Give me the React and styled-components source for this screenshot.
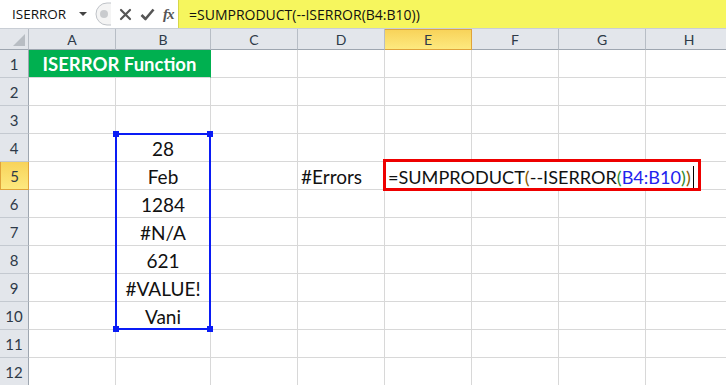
import React from "react";
import styled, { createGlobalStyle, css } from "styled-components";

const GlobalStyle = createGlobalStyle`
  body {
    margin: 0;
    background: #fff;
    overflow: hidden;
  }
`;

const COLS = ["A", "B", "C", "D", "E", "F", "G", "H"];
const COL_WIDTHS = "29px 87px 95px 87px 87px 87px 87px 87px 87px";

const DATA = {
  4: "28",
  5: "Feb",
  6: "1284",
  7: "#N/A",
  8: "621",
  9: "#VALUE!",
  10: "Vani",
};

const StyledWindow = styled.div`
  width: 726px;
  height: 385px;
  overflow: hidden;
  font-family: Lato, "Open Sans", sans-serif;
`;

const StyledFormulaBar = styled.div`
  display: flex;
  height: 28px;
  border-bottom: 1px solid #c9ced5;
  background: #fff;
  font-family: "Open Sans", "Noto Sans", sans-serif;
  font-size: 13.5px;
  color: #111;
`;

const StyledNameBox = styled.div`
  width: 92px;
  display: flex;
  align-items: center;
  justify-content: space-between;
  padding: 0 4px 0 12px;
  box-sizing: border-box;
`;

const StyledArrow = styled.span`
  width: 0;
  height: 0;
  border-left: 4px solid transparent;
  border-right: 4px solid transparent;
  border-top: 4px solid #444;
  margin-right: 1px;
`;

const StyledButtons = styled.div`
  display: flex;
  align-items: center;
  gap: 8px;
  width: 86px;
  padding-left: 3px;
  box-sizing: border-box;
`;

const StyledFx = styled.span`
  font-family: "Liberation Serif", serif;
  font-style: italic;
  font-weight: bold;
  font-size: 15px;
  color: #555;
  letter-spacing: -1px;
`;

const StyledFormulaInput = styled.div`
  flex: 1;
  display: flex;
  align-items: center;
  padding-left: 10px;
  background: #f6f65e;
  border-left: 1px solid #d6d64a;
  font-size: 14px;
`;

const StyledSheet = styled.div`
  position: relative;
  display: grid;
  grid-template-columns: ${COL_WIDTHS};
  grid-template-rows: 21px repeat(12, 28px);
`;

const headerBase = css`
  box-sizing: border-box;
  display: flex;
  align-items: center;
  justify-content: center;
  font-size: 14px;
  color: #2e3a48;
  background: #e3e6eb;
`;

const activeHeader = css`
  background: linear-gradient(#f8d35a, #fde97f);
  border-color: #e0a33a;
`;

const StyledCorner = styled.div`
  ${headerBase};
  border-right: 1px solid #b7bdc5;
  border-bottom: 1px solid #9ea6b0;
  align-items: flex-end;
  justify-content: flex-end;
  padding: 0 3px 3px 0;
`;

const StyledColHeader = styled.div`
  ${headerBase};
  border-right: 1px solid #b7bdc5;
  border-bottom: 1px solid #9ea6b0;
  ${(p) => p.$active && activeHeader};
  ${(p) => p.$active && "border: 1px solid #e0a33a; border-left: none;"};
`;

const StyledRowHeader = styled.div`
  ${headerBase};
  border-right: 1px solid #9ea6b0;
  border-bottom: 1px solid #c4c9d0;
  font-size: 15px;
  ${(p) => p.$active && activeHeader};
  ${(p) => p.$active && "border: 1px solid #e0a33a; border-top: none;"};
`;

const StyledCell = styled.div`
  position: relative;
  box-sizing: border-box;
  display: flex;
  align-items: center;
  justify-content: ${(p) => p.$align || "flex-start"};
  padding: 2px 3px 0;
  border-right: 1px solid ${(p) => (p.$noGrid ? "transparent" : "#d8d8d8")};
  border-bottom: 1px solid #d8d8d8;
  font-size: 19px;
  color: #111;
  white-space: nowrap;
  grid-column: span ${(p) => p.$span || 1};
  ${(p) =>
    p.$title &&
    css`
      background: #00b050;
      color: #fff;
      font-weight: bold;
      font-size: 18.5px;
      border-right-color: #00b050;
      padding-top: 0;
    `}
`;

const StyledSelection = styled.div`
  position: absolute;
  left: 115px;
  top: 104px;
  width: 96px;
  height: 197px;
  box-sizing: border-box;
  border: 2px solid #0a1cf5;
  pointer-events: none;
`;

const StyledHandle = styled.span`
  position: absolute;
  width: 6px;
  height: 6px;
  background: #0a1cf5;
  ${(p) => (p.$top ? "top: -4px;" : "bottom: -4px;")}
  ${(p) => (p.$left ? "left: -4px;" : "right: -4px;")}
`;

const StyledRedBox = styled.div`
  position: absolute;
  left: -2px;
  top: -3px;
  width: 318px;
  height: 32px;
  box-sizing: border-box;
  border: 3px solid #ee0000;
  z-index: 2;
  pointer-events: none;
`;

const StyledFormula = styled.span`
  position: relative;
  z-index: 1;
  display: flex;
  align-items: center;
  font-size: 18.1px;
`;

const StyledPart = styled.span`
  color: ${(p) => p.$color || "#111"};
`;

const StyledCaret = styled.span`
  display: inline-block;
  width: 0;
  height: 22px;
  margin-left: 2px;
  border-left: 1.5px solid #000;
`;

const CrossIcon = () => (
  <svg width="13" height="13" viewBox="0 0 13 13">
    <path d="M2 2 L11 11 M11 2 L2 11" stroke="#555" strokeWidth="2.2" strokeLinecap="round" />
  </svg>
);

const CheckIcon = () => (
  <svg width="15" height="13" viewBox="0 0 15 13">
    <path d="M1.5 7 L5.5 11 L13.5 1.5" stroke="#555" strokeWidth="2.6" fill="none" strokeLinejoin="round" />
  </svg>
);

const CapIcon = () => (
  <svg width="16" height="24" viewBox="0 0 16 24">
    <path d="M16 1 H12 A11 11 0 0 0 12 23 H16" fill="#f4f4f4" stroke="#bfc3c8" strokeWidth="1" />
    <circle cx="9" cy="12" r="4" fill="#c9cbce" />
  </svg>
);

const CornerTriangle = () => (
  <svg width="12" height="12" viewBox="0 0 12 12">
    <path d="M0 12 L12 12 L12 0 Z" fill="#b8bdc3" />
  </svg>
);

const Formula = () => (
  <StyledFormula>
    <StyledPart>=SUMPRODUCT</StyledPart>
    <StyledPart $color="#8a5a00">(</StyledPart>
    <StyledPart>--ISERROR</StyledPart>
    <StyledPart $color="#2e8b2e">(</StyledPart>
    <StyledPart $color="#2222ee">B4:B10</StyledPart>
    <StyledPart $color="#2e8b2e">)</StyledPart>
    <StyledPart $color="#8a5a00">)</StyledPart>
    <StyledCaret />
  </StyledFormula>
);

const renderCell = (row, col) => {
  const key = `${col}${row}`;
  if (row === 1 && col === "A") {
    return (
      <StyledCell key={key} $span={2} $align="center" $title>
        ISERROR Function
      </StyledCell>
    );
  }
  if (row === 1 && col === "B") return null;
  if (col === "B" && DATA[row]) {
    return (
      <StyledCell key={key} $align="center">
        {DATA[row]}
      </StyledCell>
    );
  }
  if (row === 5 && col === "D") {
    return <StyledCell key={key}>#Errors</StyledCell>;
  }
  if (row === 5 && col === "E") {
    return (
      <StyledCell key={key} $noGrid>
        <Formula />
        <StyledRedBox />
      </StyledCell>
    );
  }
  if (row === 5 && (col === "F" || col === "G")) {
    return <StyledCell key={key} $noGrid />;
  }
  return <StyledCell key={key} />;
};

const App = () => {
  const rows = Array.from({ length: 12 }, (_, i) => i + 1);

  return (
    <StyledWindow>
      <GlobalStyle />
      <StyledFormulaBar>
        <StyledNameBox>
          ISERROR
          <StyledArrow />
        </StyledNameBox>
        <StyledButtons>
          <CapIcon />
          <CrossIcon />
          <CheckIcon />
          <StyledFx>fx</StyledFx>
        </StyledButtons>
        <StyledFormulaInput>=SUMPRODUCT(--ISERROR(B4:B10))</StyledFormulaInput>
      </StyledFormulaBar>

      <StyledSheet>
        <StyledCorner>
          <CornerTriangle />
        </StyledCorner>
        {COLS.map((c) => (
          <StyledColHeader key={c} $active={c === "E"}>
            {c}
          </StyledColHeader>
        ))}
        {rows.map((r) => (
          <React.Fragment key={r}>
            <StyledRowHeader $active={r === 5}>{r}</StyledRowHeader>
            {COLS.map((c) => renderCell(r, c))}
          </React.Fragment>
        ))}
        <StyledSelection>
          <StyledHandle $top $left />
          <StyledHandle $top />
          <StyledHandle $left />
          <StyledHandle />
        </StyledSelection>
      </StyledSheet>
    </StyledWindow>
  );
};

export default App;
